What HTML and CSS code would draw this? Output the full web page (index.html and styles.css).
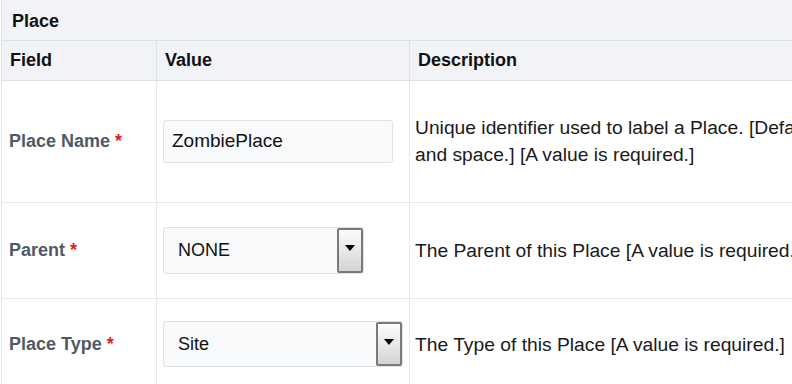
FILE: index.html
```html
<!DOCTYPE html>
<html lang="en">
<head>
    <meta charset="UTF-8">
    <title>Place</title>
    <link rel="stylesheet" href="styles.css">
</head>
<body>
    <table class="form-table">
        <colgroup>
            <col class="col-field">
            <col class="col-value">
            <col class="col-desc">
        </colgroup>
        <thead>
            <tr class="title-row">
                <th colspan="3">Place</th>
            </tr>
            <tr class="head-row">
                <th>Field</th>
                <th>Value</th>
                <th>Description</th>
            </tr>
        </thead>
        <tbody>
            <tr class="row-name">
                <td class="label">Place Name <span class="req">*</span></td>
                <td><input type="text" class="text-input" value="ZombiePlace"></td>
                <td class="desc">Unique identifier used to label a Place. [Default is a combination of letters, numbers, underscore<br>and space.] [A value is required.]</td>
            </tr>
            <tr class="row-parent">
                <td class="label">Parent <span class="req">*</span></td>
                <td>
                    <div class="select select-parent">
                        <span class="select-text">NONE</span>
                        <span class="select-btn"><span class="arrow"></span></span>
                    </div>
                </td>
                <td class="desc">The Parent of this Place [A value is required.]</td>
            </tr>
            <tr class="row-type">
                <td class="label">Place Type <span class="req">*</span></td>
                <td>
                    <div class="select select-type">
                        <span class="select-text">Site</span>
                        <span class="select-btn"><span class="arrow"></span></span>
                    </div>
                </td>
                <td class="desc">The Type of this Place [A value is required.]</td>
            </tr>
        </tbody>
    </table>
</body>
</html>
```

FILE: styles.css
```css
:root {
    --head-bg: #f1f3f7;
    --head-border: #dbe2ea;
    --row-border: #e6e8eb;
    --text-dark: #111111;
    --label-gray: #4f5a66;
    --req-red: #e02020;
}

* {
    box-sizing: border-box;
}

body {
    margin: 0;
    padding: 0 0 0 1px;
    width: 792px;
    height: 384px;
    overflow: hidden;
    background: white;
    font-family: "Liberation Sans", Arial, sans-serif;
    color: var(--text-dark);
}

.form-table {
    border-collapse: collapse;
    table-layout: fixed;
    width: 1100px;
}

.col-field {
    width: 155px;
}

.col-value {
    width: 253px;
}

.form-table th {
    background-color: var(--head-bg);
    text-align: left;
    font-size: 18px;
    font-weight: bold;
    padding: 0 8px;
    border: 1px solid var(--head-border);
}

.title-row th {
    height: 40px;
    padding-left: 10px;
    padding-top: 3px;
    border-top: none;
}

.head-row th {
    height: 40px;
}

.form-table td {
    border: 1px solid var(--row-border);
    vertical-align: middle;
    padding: 0 6px;
}

.row-name td {
    height: 122px;
}

.row-parent td {
    height: 96px;
}

.row-type td {
    height: 92px;
}

.label {
    color: var(--label-gray);
    font-size: 18px;
    font-weight: bold;
    padding-left: 7px !important;
    padding-top: 1px !important;
}

.req {
    color: var(--req-red);
}

.desc {
    font-size: 19.25px;
    line-height: 27px;
    white-space: nowrap;
    padding-left: 5px !important;
    color: #1a1a1a;
}

.text-input {
    display: block;
    width: 230px;
    height: 43px;
    padding: 0 8px;
    border: 1px solid #dfe3e8;
    border-radius: 3px;
    background: #f9fafc;
    font-family: "Liberation Sans", Arial, sans-serif;
    font-size: 19px;
    color: var(--text-dark);
}

.select {
    display: flex;
    align-items: center;
    justify-content: space-between;
    height: 47px;
    border: 1px solid #dfe3e8;
    border-radius: 3px;
    background: #f9fafc;
    font-size: 18px;
}

.select-parent {
    width: 201px;
}

.select-type {
    width: 240px;
    height: 46px;
}

.select-text {
    padding-left: 14px;
}

.select-btn {
    display: flex;
    align-items: center;
    justify-content: center;
    align-self: stretch;
    width: 26px;
    border: 2px solid #7a7a7a;
    border-radius: 2px;
    background: linear-gradient(#fbfbfb, #e9e9e9 50%, #d3d3d3);
}

.arrow {
    width: 0;
    height: 0;
    border-left: 5px solid transparent;
    border-right: 5px solid transparent;
    border-top: 6px solid #000;
    margin-bottom: 4px;
}
```
